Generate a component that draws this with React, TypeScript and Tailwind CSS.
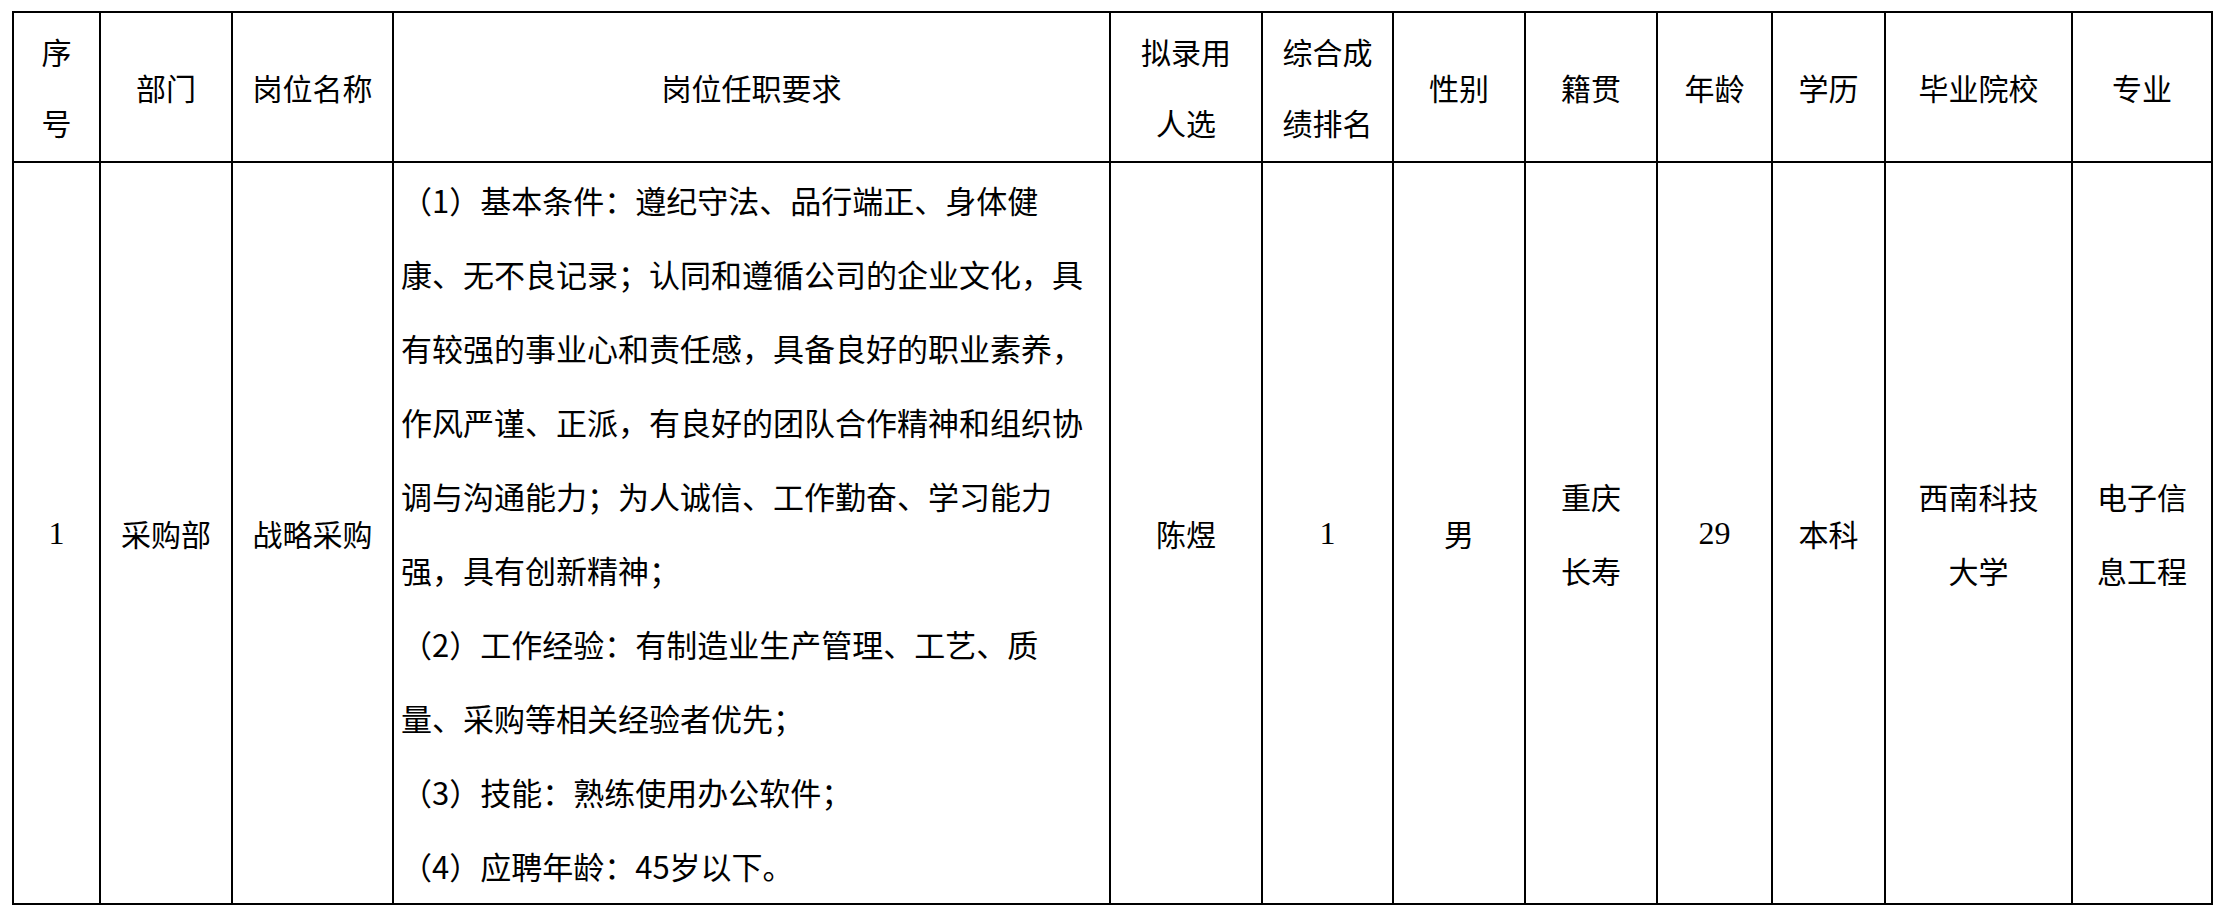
const cjk = "font-['Noto_Sans_CJK_SC','Noto_Sans',sans-serif]";

const requirements = [
  '（1）基本条件：遵纪守法、品行端正、身体健',
  '康、无不良记录；认同和遵循公司的企业文化，具',
  '有较强的事业心和责任感，具备良好的职业素养，',
  '作风严谨、正派，有良好的团队合作精神和组织协',
  '调与沟通能力；为人诚信、工作勤奋、学习能力',
  '强，具有创新精神；',
  '（2）工作经验：有制造业生产管理、工艺、质',
  '量、采购等相关经验者优先；',
  '（3）技能：熟练使用办公软件；',
  '（4）应聘年龄：45岁以下。',
];

const colWidths = ['w-[87px]', 'w-[132px]', 'w-[161px]', 'w-[717px]', 'w-[152px]', 'w-[131px]', 'w-[132px]', 'w-[132px]', 'w-[115px]', 'w-[113px]', 'w-[187px]', 'w-[140px]'];

function Head({ lines }: { lines: string[] }) {
  return (
    <th className="border-2 border-black p-0 text-center align-middle font-normal">
      {lines.map((l) => (
        <div key={l} className="leading-[71px] whitespace-nowrap">
          {l}
        </div>
      ))}
    </th>
  );
}

function Cell({ lines, serif }: { lines: string[]; serif?: boolean }) {
  return (
    <td className={`border-2 border-black p-0 text-center align-middle ${serif ? "font-['Liberation_Serif',serif] text-[32px]" : ''}`}>
      {lines.map((l) => (
        <div key={l} className="leading-[74px] whitespace-nowrap">
          {l}
        </div>
      ))}
    </td>
  );
}

export default function App() {
  return (
    <div className={`w-[2221px] h-[910px] bg-white pl-[12px] pt-[11px] text-black ${cjk}`}>
      <table className="table-fixed border-collapse border-2 border-black w-[2199px] text-[30px]">
        <colgroup>
          {colWidths.map((w, i) => (
            <col key={i} className={w} />
          ))}
        </colgroup>
        <thead>
          <tr className="h-[150px]">
            <Head lines={['序', '号']} />
            <Head lines={['部门']} />
            <Head lines={['岗位名称']} />
            <Head lines={['岗位任职要求']} />
            <Head lines={['拟录用', '人选']} />
            <Head lines={['综合成', '绩排名']} />
            <Head lines={['性别']} />
            <Head lines={['籍贯']} />
            <Head lines={['年龄']} />
            <Head lines={['学历']} />
            <Head lines={['毕业院校']} />
            <Head lines={['专业']} />
          </tr>
        </thead>
        <tbody>
          <tr className="h-[741px]">
            <Cell lines={['1']} serif />
            <Cell lines={['采购部']} />
            <Cell lines={['战略采购']} />
            <td className="border-2 border-black px-[7px] py-0 align-top text-left text-[31px]">
              {requirements.map((l) => (
                <div key={l} className="leading-[74px] whitespace-nowrap">
                  {l}
                </div>
              ))}
            </td>
            <Cell lines={['陈煜']} />
            <Cell lines={['1']} serif />
            <Cell lines={['男']} />
            <Cell lines={['重庆', '长寿']} />
            <Cell lines={['29']} serif />
            <Cell lines={['本科']} />
            <Cell lines={['西南科技', '大学']} />
            <Cell lines={['电子信', '息工程']} />
          </tr>
        </tbody>
      </table>
    </div>
  );
}
